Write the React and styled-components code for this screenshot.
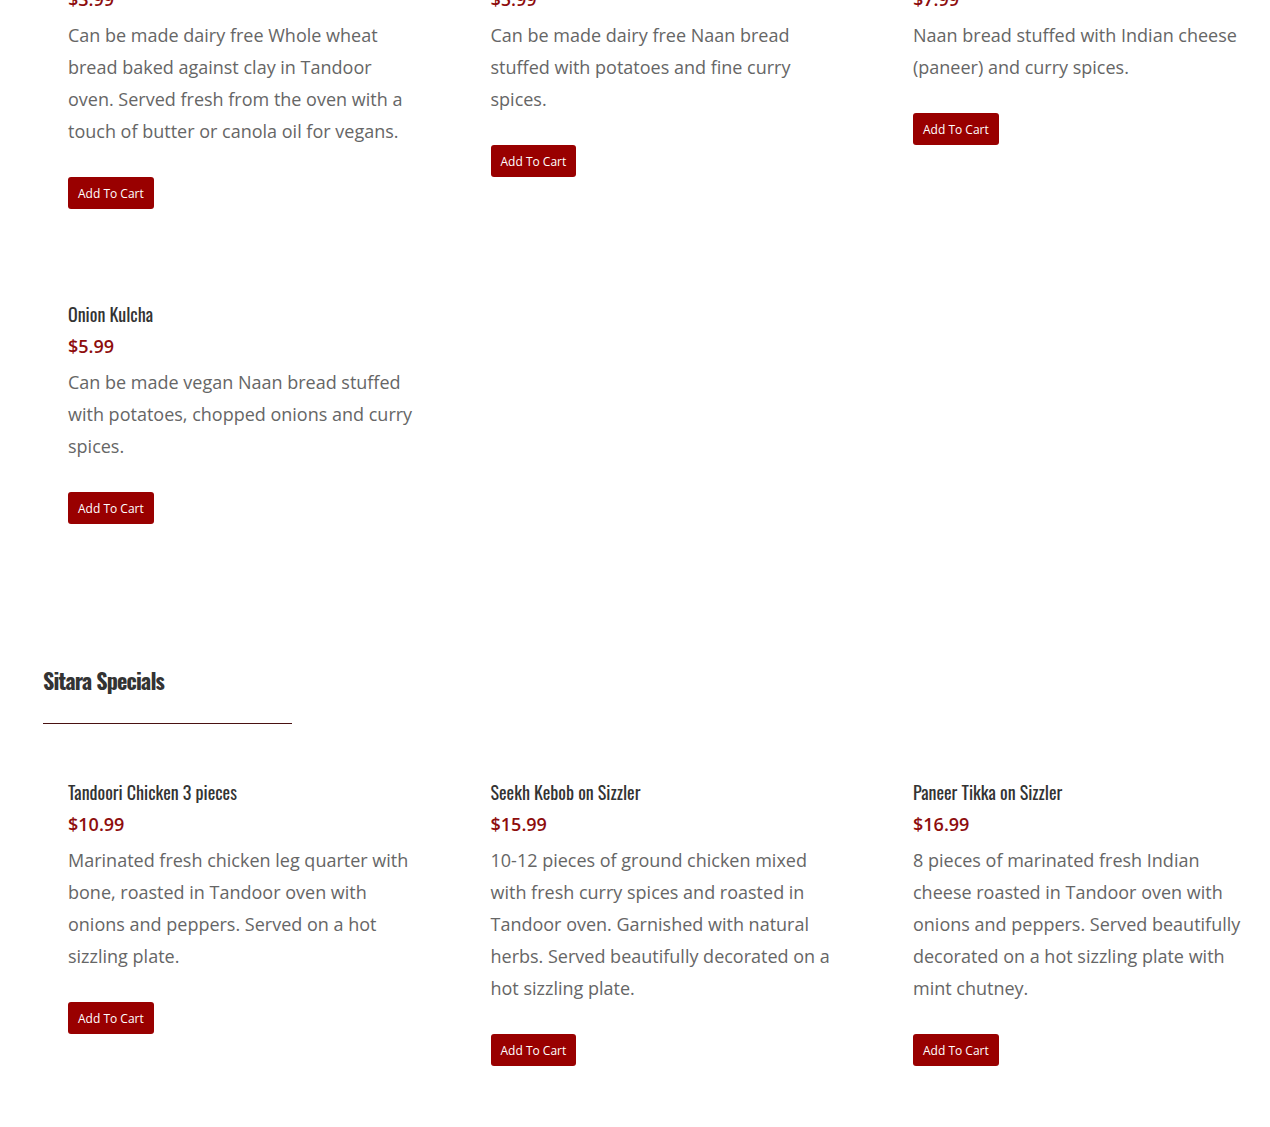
import React from "react";
import styled, { createGlobalStyle } from "styled-components";

const Global = createGlobalStyle`
  html, body { margin: 0; padding: 0; background: #fff; }
  body { font-family: "Open Sans", "Liberation Sans", sans-serif; overflow: hidden; }
`;

const Page = styled.div`
  padding: 0 0 0 43px;
  width: 1227px;
`;

const Section = styled.section`
  margin-top: ${(p) => p.$top}px;
`;

const Heading = styled.h2`
  margin: 0;
  font-family: "Oswald", "Liberation Sans Narrow", "DejaVu Sans Condensed", "Roboto Condensed", sans-serif;
  font-stretch: condensed;
  font-weight: 700;
  font-size: 22px;
  line-height: 32px;
  color: #333;
  letter-spacing: -0.8px;
`;

const Divider = styled.div`
  width: 249px;
  height: 1px;
  background: #4a1212;
  margin-top: 27px;
`;

const Grid = styled.div`
  display: grid;
  grid-template-columns: repeat(3, 345px);
  column-gap: 77.5px;
  row-gap: 89px;
  align-items: start;
  padding-left: 25px;
  margin-top: ${(p) => p.$top || 0}px;
`;

const Item = styled.div`
  display: flex;
  flex-direction: column;
  align-items: flex-start;
`;

const Title = styled.h3`
  margin: 0;
  font-family: "Oswald", "Liberation Sans Narrow", "DejaVu Sans Condensed", "Roboto Condensed", sans-serif;
  font-stretch: condensed;
  font-weight: 400;
  font-size: 18px;
  line-height: 32px;
  color: #333;
`;

const Price = styled.div`
  font-size: 18px;
  font-weight: 600;
  line-height: 32px;
  color: #8e0d0d;
  margin-bottom: 4px;
`;

const Desc = styled.p`
  margin: 0 0 30px;
  font-size: 18px;
  line-height: 32px;
  color: #666;
`;

const Button = styled.button`
  height: 32px;
  padding: 0 10px;
  border: none;
  border-radius: 3px;
  background: #990000;
  color: #fff;
  font-family: "Open Sans", "Liberation Sans", sans-serif;
  font-size: 12px;
  cursor: pointer;
`;

const breads = [
  {
    title: "Tandoori Roti",
    price: "$3.99",
    desc: "Can be made dairy free Whole wheat bread baked against clay in Tandoor oven. Served fresh from the oven with a touch of butter or canola oil for vegans.",
  },
  {
    title: "Aloo Naan",
    price: "$5.99",
    desc: "Can be made dairy free Naan bread stuffed with potatoes and fine curry spices.",
  },
  {
    title: "Paneer Kulcha",
    price: "$7.99",
    desc: "Naan bread stuffed with Indian cheese (paneer) and curry spices.",
  },
  {
    title: "Onion Kulcha",
    price: "$5.99",
    desc: "Can be made vegan Naan bread stuffed with potatoes, chopped onions and curry spices.",
  },
];

const specials = [
  {
    title: "Tandoori Chicken 3 pieces",
    price: "$10.99",
    desc: "Marinated fresh chicken leg quarter with bone, roasted in Tandoor oven with onions and peppers. Served on a hot sizzling plate.",
  },
  {
    title: "Seekh Kebob on Sizzler",
    price: "$15.99",
    desc: "10-12 pieces of ground chicken mixed with fresh curry spices and roasted in Tandoor oven. Garnished with natural herbs. Served beautifully decorated on a hot sizzling plate.",
  },
  {
    title: "Paneer Tikka on Sizzler",
    price: "$16.99",
    desc: "8 pieces of marinated fresh Indian cheese roasted in Tandoor oven with onions and peppers. Served beautifully decorated on a hot sizzling plate with mint chutney.",
  },
];

function MenuItem({ item }) {
  return (
    <Item>
      <Title>{item.title}</Title>
      <Price>{item.price}</Price>
      <Desc>{item.desc}</Desc>
      <Button>Add To Cart</Button>
    </Item>
  );
}

export default function App() {
  return (
    <>
      <Global />
      <Page>
        <Section $top={-49}>
          <Grid>
            {breads.map((b) => (
              <MenuItem key={b.title} item={b} />
            ))}
          </Grid>
        </Section>
        <Section $top={140}>
          <Heading>Sitara Specials</Heading>
          <Divider />
          <Grid $top={52}>
            {specials.map((s) => (
              <MenuItem key={s.title} item={s} />
            ))}
          </Grid>
        </Section>
      </Page>
    </>
  );
}
